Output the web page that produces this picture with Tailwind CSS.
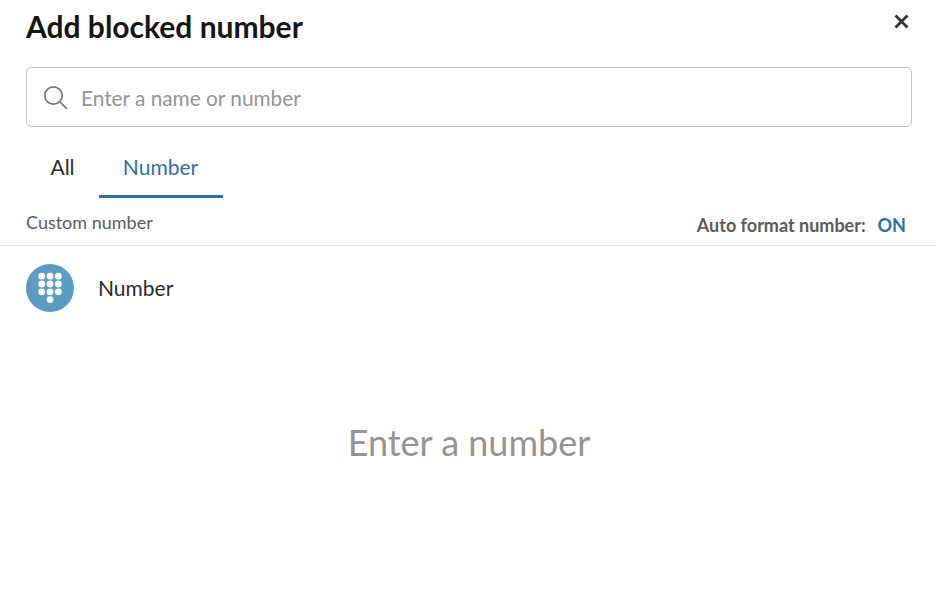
<!DOCTYPE html>
<html>
<head>
<meta charset="utf-8">
<script src="https://cdn.jsdelivr.net/npm/@tailwindcss/browser@4"></script>
</head>
<body class="bg-white font-['Lato','Liberation_Sans',sans-serif] w-[936px] h-[594px] overflow-hidden">
<div class="flex flex-col w-[936px] h-[594px]">
  <header class="flex justify-between h-[67px] pl-[26px] pr-[25px]">
    <h1 class="mt-[8px] text-[30px] leading-[36px] font-bold text-[#161616]">Add blocked number</h1>
    <button class="mt-[12px] w-[19px] h-[19px] flex items-center justify-center">
      <svg width="17" height="17" viewBox="0 0 17 17" fill="none" stroke="#333" stroke-width="2.8"><path d="M2.5 2.5L14.5 14.5M14.5 2.5L2.5 14.5"/></svg>
    </button>
  </header>
  <div class="ml-[26px] mr-[24px] h-[60px] border border-[#c4c4c4] rounded-[5px] flex items-center pl-[16px] gap-[13px]">
    <svg width="25" height="25" viewBox="0 0 25 25" fill="none" stroke="#767676" stroke-width="1.7"><circle cx="10.5" cy="10.5" r="8.7"/><path d="M17 17L24 24"/></svg>
    <span class="relative top-[1px] text-[20.8px] text-[#949494]">Enter a name or number</span>
  </div>
  <nav class="flex pl-[26px] mt-[12px] h-[59px]">
    <div class="w-[73px] h-full flex items-center justify-center text-[21px] text-[#2b2b2b] pb-[3px]">All</div>
    <div class="w-[124px] h-full flex items-center justify-center text-[21px] text-[#2e70a8] border-b-[3px] border-[#2e70a8] pr-[1px]">Number</div>
  </nav>
  <div class="flex justify-between h-[48px] border-b border-[#e4e4e4] pl-[26px] pr-[30px]">
    <span class="mt-[13px] text-[18px] leading-[22px] text-[#5c5c5c]">Custom number</span>
    <div class="mt-[16px] flex gap-[12px] text-[18px] leading-[22px] font-bold">
      <span class="text-[#5c5c5c]">Auto format number:</span>
      <span class="text-[#2e70a8]">ON</span>
    </div>
  </div>
  <div class="flex items-center pl-[26px] mt-[18px] gap-[24px]">
    <svg width="48" height="48" viewBox="0 0 48 48" fill="#fff">
      <circle cx="24" cy="24" r="24" fill="#5b9cc3"/>
      <circle cx="15.7" cy="12.2" r="3.4"/><circle cx="24" cy="12.2" r="3.4"/><circle cx="32.3" cy="12.2" r="3.4"/>
      <circle cx="15.7" cy="20" r="3.4"/><circle cx="24" cy="20" r="3.4"/><circle cx="32.3" cy="20" r="3.4"/>
      <circle cx="15.7" cy="27.8" r="3.4"/><circle cx="24" cy="27.8" r="3.4"/><circle cx="32.3" cy="27.8" r="3.4"/>
      <circle cx="24" cy="35.6" r="3.4"/>
    </svg>
    <span class="text-[21px] text-[#2b2b2b]">Number</span>
  </div>
  <div class="mt-[106px] text-center pl-[2px] text-[36px] leading-[48px] text-[#949494]">Enter a number</div>
</div>
</body>
</html>
